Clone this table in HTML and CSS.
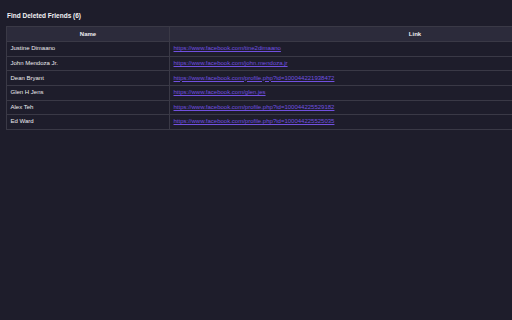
FILE: index.html
```html
<!DOCTYPE html>
<html lang="en">
<head>
    <meta charset="UTF-8">
    <meta name="viewport" content="width=device-width, initial-scale=1.0">
    <title>Find Deleted Friends</title>
    <link rel="stylesheet" href="styles.css">
</head>
<body>
    <div class="container">
        <h2 class="title">Find Deleted Friends (6)</h2>
        <div class="table-wrap">
            <table class="friends">
                <thead>
                    <tr>
                        <th class="col-name">Name</th>
                        <th>Link</th>
                    </tr>
                </thead>
                <tbody>
                    <tr>
                        <td>Justine Dimaano</td>
                        <td><a href="#">https://www.facebook.com/tine2dimaano</a></td>
                    </tr>
                    <tr>
                        <td>John Mendoza Jr.</td>
                        <td><a href="#">https://www.facebook.com/john.mendoza.jr</a></td>
                    </tr>
                    <tr>
                        <td>Dean Bryant</td>
                        <td><a href="#">https://www.facebook.com/profile.php?id=100044221938472</a></td>
                    </tr>
                    <tr>
                        <td>Glen H Jens</td>
                        <td><a href="#">https://www.facebook.com/glen.jes</a></td>
                    </tr>
                    <tr>
                        <td>Alex Teh</td>
                        <td><a href="#">https://www.facebook.com/profile.php?id=100044225529182</a></td>
                    </tr>
                    <tr>
                        <td>Ed Ward</td>
                        <td><a href="#">https://www.facebook.com/profile.php?id=100044225525035</a></td>
                    </tr>
                </tbody>
            </table>
        </div>
    </div>
</body>
</html>
```

FILE: styles.css
```css
body {
    font-family: "Liberation Sans", Arial, sans-serif;
    margin: 0;
    padding: 0;
    background-color: #1e1d2b;
    color: #ececf0;
    overflow: hidden;
}

.container {
    padding: 12px 0 12px 6px;
}

.title {
    font-size: 6.5px;
    font-weight: bold;
    line-height: 8px;
    margin: 0 0 6px 1px;
    color: #f2f2f5;
}

/* the table is wider than the popup, so it gets cut on the right */
.table-wrap {
    overflow: hidden;
}

.friends {
    width: 655px;
    border-collapse: collapse;
    font-size: 6px;
    line-height: 7px;
}

.friends th,
.friends td {
    border: 1px solid #3a3946;
    padding: 3.3px 3.5px;
}

.friends th {
    background-color: #2c2b3b;
    font-weight: bold;
    text-align: center;
    padding: 3.6px 3.5px;
}

.friends td {
    text-align: left;
}

.col-name {
    width: 155px;
}

.friends a {
    color: #7150e0;
    text-decoration: underline;
}
```
